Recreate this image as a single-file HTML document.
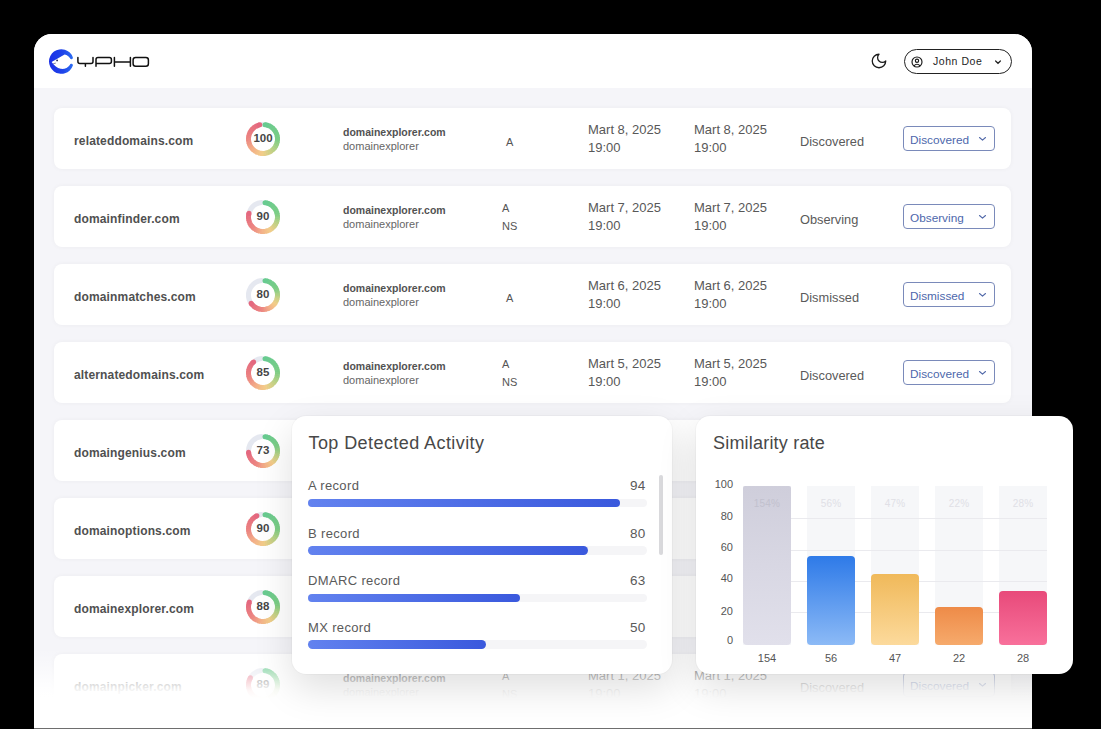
<!DOCTYPE html>
<html><head><meta charset="utf-8">
<style>
*{box-sizing:border-box;margin:0;padding:0}
html,body{width:1101px;height:729px;overflow:hidden;background:#000;font-family:"Liberation Sans",sans-serif}
#win{position:absolute;left:34px;top:34px;width:998px;height:695px;background:#f5f5f9;border-radius:18px 18px 0 0;overflow:hidden}
#hdr{position:absolute;left:0;top:0;width:998px;height:54px;background:#fff}
.row{position:absolute;left:54px;width:957px;height:61px;background:#fff;border-radius:8px;box-shadow:0 0 5px rgba(0,0,0,0.045)}
.t{position:absolute;white-space:nowrap;line-height:1}
.name{left:20px;font-size:12px;font-weight:700;color:#505050;letter-spacing:0.15px}
.ring{position:absolute;left:192px;top:13.5px;width:34px;height:34px}
.ring svg{opacity:0.9}
.ring .in{position:absolute;left:0;top:0;width:34px;height:34px;font-size:11.5px;font-weight:700;color:#464646;text-align:center;line-height:33px}
.d1{left:289px;font-size:10.5px;font-weight:700;color:#525252}
.d2{left:289px;font-size:11px;color:#666}
.rec{font-size:11px;color:#555}
.dt{font-size:13px;color:#585858}
.st{left:746px;top:28px;font-size:12.8px;color:#5a5a5a}
.sel{position:absolute;left:849px;top:18px;width:92px;height:25px;border:1px solid #7a8aba;border-radius:4px}
.sel span{position:absolute;left:6px;top:8px;font-size:11.8px;color:#4d67ac;line-height:1;white-space:nowrap}
.sel svg{position:absolute;left:74px;top:9px}
#fade{position:absolute;left:34px;top:648px;width:998px;height:81px;background:linear-gradient(to bottom,rgba(255,255,255,0) 0px,rgba(255,255,255,0.3) 16px,rgba(255,255,255,0.7) 32px,rgba(255,255,255,0.93) 42px,#fff 50px,#fff 81px)}
#botline{position:absolute;left:34px;top:728px;width:998px;height:1px;background:#6e6e6e}
.card{position:absolute;top:416px;height:258px;background:#fff;border-radius:14px;box-shadow:0 14px 38px rgba(0,0,0,0.13),0 0 0 1px rgba(0,0,0,0.025)}
.ct{position:absolute;white-space:nowrap;line-height:1}
.lbl{position:absolute;left:16px;font-size:13px;letter-spacing:0.35px;color:#5a5a5a;line-height:1;white-space:nowrap}
.val{position:absolute;right:26.5px;font-size:13.5px;letter-spacing:0.3px;color:#5a5a5a;line-height:1;white-space:nowrap}
.trk{position:absolute;left:16px;width:339px;height:8.5px;border-radius:5px;background:#f5f5f7}
.fill{height:8.5px;border-radius:5px;background:linear-gradient(to right,#6282ef,#3a59dd)}
.yl{position:absolute;right:340px;font-size:11px;color:#555;line-height:1;white-space:nowrap;text-align:right}
.col{position:absolute;top:70px;width:48px;height:159px;background:#f6f7f9}
.grid{position:absolute;left:47px;width:304px;height:1px;background:#eaeaee}
.bar{position:absolute;width:48px;border-radius:4px}
.pl{position:absolute;top:83px;width:48px;text-align:center;font-size:10px;letter-spacing:0.2px;color:#e0e0e6;line-height:1}
.xl{position:absolute;top:237px;width:48px;text-align:center;font-size:11px;color:#555;line-height:1}

</style></head><body>
<div id="win"><div id="hdr"></div></div>
<svg style="position:absolute;left:44px;top:45px" width="110" height="33" viewBox="44 45 110 33">
<defs><linearGradient id="lg" x1="0" y1="0" x2="1" y2="0"><stop offset="0" stop-color="#1b2fe6"/><stop offset="0.6" stop-color="#1f45ea"/><stop offset="1" stop-color="#2d6ef2"/></linearGradient></defs>
<path d="M72.9 57.4 A1.6 1.6 0 0 1 69.8 58.1 C69.2 56.6 67.2 54.8 64.6 54.4 L51.6 62.1 C54.3 65.6 57.2 68.2 60.6 68.8 C64.2 69.4 68.2 67.6 69.8 64.9 A1.6 1.6 0 0 1 72.9 65.6 A12.3 12.3 0 1 1 72.9 57.4 Z" fill="url(#lg)"/>
<circle cx="57.1" cy="60.4" r="0.85" fill="#1a1a40"/>
<path d="M53.2 63.7 L55.8 63.1" stroke="#2a2a60" stroke-width="0.6"/>
<g fill="none" stroke="#111" stroke-width="1.5" stroke-linejoin="round" stroke-linecap="round">
<path d="M77.9 57.6 V61.6 Q77.9 63.6 79.9 63.6 H91 Q93 63.6 93 61.6 V57.6 M85.4 63.6 V66.3"/>
<path d="M96 66.3 V59.6 Q96 57.6 98 57.6 H109.4 Q111.4 57.6 111.4 59.6 V61.6 Q111.4 63.6 109.4 63.6 H96"/>
<path d="M114.4 57.6 V66.3 M130.4 57.6 V66.3 M114.4 61.9 H130.4"/>
<path d="M135.6 57.6 H145.9 Q148.4 57.6 148.4 60.1 V63.8 Q148.4 66.3 145.9 66.3 H135.6 Q133.1 66.3 133.1 63.8 V60.1 Q133.1 57.6 135.6 57.6 Z"/>
</g>
</svg>
<svg style="position:absolute;left:870px;top:52px" width="18" height="18" viewBox="0 0 24 24"><path d="M12 3a6 6 0 0 0 9 9 9 9 0 1 1-9-9Z" fill="none" stroke="#1a1a1a" stroke-width="1.7" stroke-linecap="round" stroke-linejoin="round"/></svg>
<div style="position:absolute;left:904px;top:49px;width:108px;height:25px;border:1.2px solid #222;border-radius:13px"></div>
<svg style="position:absolute;left:910.5px;top:56px" width="12" height="12" viewBox="0 0 24 24"><g fill="none" stroke="#1a1a1a" stroke-width="2.3" stroke-linecap="round" stroke-linejoin="round"><circle cx="12" cy="12" r="10"/><circle cx="12" cy="9.5" r="3.3"/><path d="M17.5 19.5a6 5 0 0 0-11 0"/></g></svg>
<div style="position:absolute;left:933px;top:56px;font-size:10.5px;color:#1e1e1e;line-height:1;white-space:nowrap;letter-spacing:0.55px">John Doe</div>
<svg style="position:absolute;left:994px;top:58.5px" width="8" height="6" viewBox="0 0 8 6"><path d="M1.6 2 L4 4.3 L6.4 2" fill="none" stroke="#222" stroke-width="1.2" stroke-linecap="round"/></svg>
<div class="row" style="top:108px"><div class="t name" style="top:27px">relateddomains.com</div><div class="ring"><svg width="34" height="34" viewBox="0 0 34 34" style="position:absolute;left:0;top:0"><g fill="none" stroke-width="5"><path d="M15.74 2.56A14.5 14.5 0 0 1 15.48 2.58" stroke="#e3e6ef" stroke-linecap="round"/><path d="M19.02 2.64A14.5 14.5 0 0 1 21.71 3.29" stroke="#59c684" stroke-linecap="butt"/><path d="M21.11 3.10A14.5 14.5 0 0 1 23.68 4.13" stroke="#5bc683" stroke-linecap="butt"/><path d="M23.12 3.85A14.5 14.5 0 0 1 25.51 5.26" stroke="#5ec682" stroke-linecap="butt"/><path d="M24.99 4.90A14.5 14.5 0 0 1 27.15 6.64" stroke="#60c780" stroke-linecap="butt"/><path d="M26.68 6.21A14.5 14.5 0 0 1 28.56 8.25" stroke="#62c77f" stroke-linecap="butt"/><path d="M28.17 7.75A14.5 14.5 0 0 1 29.72 10.05" stroke="#64c77e" stroke-linecap="butt"/><path d="M29.41 9.50A14.5 14.5 0 0 1 30.61 12.00" stroke="#66c77d" stroke-linecap="butt"/><path d="M30.38 11.41A14.5 14.5 0 0 1 31.20 14.06" stroke="#68c87b" stroke-linecap="butt"/><path d="M31.06 13.44A14.5 14.5 0 0 1 31.48 16.18" stroke="#6bc87a" stroke-linecap="butt"/><path d="M31.43 15.55A14.5 14.5 0 0 1 31.44 18.33" stroke="#6dc879" stroke-linecap="butt"/><path d="M31.48 17.70A14.5 14.5 0 0 1 31.09 20.44" stroke="#75c878" stroke-linecap="butt"/><path d="M31.22 19.82A14.5 14.5 0 0 1 30.43 22.48" stroke="#82c978" stroke-linecap="butt"/><path d="M30.65 21.89A14.5 14.5 0 0 1 29.47 24.40" stroke="#8fca78" stroke-linecap="butt"/><path d="M29.78 23.85A14.5 14.5 0 0 1 28.24 26.15" stroke="#9dcb78" stroke-linecap="butt"/><path d="M28.63 25.66A14.5 14.5 0 0 1 26.77 27.71" stroke="#aacc78" stroke-linecap="butt"/><path d="M27.23 27.28A14.5 14.5 0 0 1 25.09 29.04" stroke="#b7cd78" stroke-linecap="butt"/><path d="M25.60 28.67A14.5 14.5 0 0 1 23.23 30.10" stroke="#c3cc79" stroke-linecap="butt"/><path d="M23.79 29.81A14.5 14.5 0 0 1 21.23 30.87" stroke="#cecb7a" stroke-linecap="butt"/><path d="M21.83 30.67A14.5 14.5 0 0 1 19.14 31.34" stroke="#d9ca7b" stroke-linecap="butt"/><path d="M19.76 31.23A14.5 14.5 0 0 1 17.00 31.50" stroke="#e4c97c" stroke-linecap="butt"/><path d="M17.63 31.49A14.5 14.5 0 0 1 14.86 31.34" stroke="#efc87d" stroke-linecap="butt"/><path d="M15.49 31.42A14.5 14.5 0 0 1 12.77 30.87" stroke="#f2c37d" stroke-linecap="butt"/><path d="M13.38 31.04A14.5 14.5 0 0 1 10.77 30.10" stroke="#f2bd7d" stroke-linecap="butt"/><path d="M11.35 30.35A14.5 14.5 0 0 1 8.91 29.04" stroke="#f2b67c" stroke-linecap="butt"/><path d="M9.45 29.38A14.5 14.5 0 0 1 7.23 27.71" stroke="#f2af7c" stroke-linecap="butt"/><path d="M7.70 28.13A14.5 14.5 0 0 1 5.76 26.15" stroke="#f2a87c" stroke-linecap="butt"/><path d="M6.17 26.64A14.5 14.5 0 0 1 4.53 24.40" stroke="#f1a17b" stroke-linecap="butt"/><path d="M4.86 24.93A14.5 14.5 0 0 1 3.57 22.48" stroke="#f0987a" stroke-linecap="butt"/><path d="M3.83 23.06A14.5 14.5 0 0 1 2.91 20.44" stroke="#ee8f78" stroke-linecap="butt"/><path d="M3.08 21.05A14.5 14.5 0 0 1 2.56 18.33" stroke="#ed8777" stroke-linecap="butt"/><path d="M2.63 18.96A14.5 14.5 0 0 1 2.52 16.18" stroke="#eb7e75" stroke-linecap="butt"/><path d="M2.50 16.82A14.5 14.5 0 0 1 2.80 14.06" stroke="#ea7774" stroke-linecap="butt"/><path d="M2.69 14.68A14.5 14.5 0 0 1 3.39 12.00" stroke="#e97374" stroke-linecap="butt"/><path d="M3.18 12.60A14.5 14.5 0 0 1 4.28 10.05" stroke="#e87073" stroke-linecap="butt"/><path d="M3.98 10.61A14.5 14.5 0 0 1 5.44 8.25" stroke="#e76c73" stroke-linecap="butt"/><path d="M5.07 8.76A14.5 14.5 0 0 1 6.85 6.64" stroke="#e66873" stroke-linecap="butt"/><path d="M6.41 7.09A14.5 14.5 0 0 1 8.49 5.26" stroke="#e56573" stroke-linecap="butt"/><path d="M7.99 5.64A14.5 14.5 0 0 1 10.32 4.13" stroke="#e46173" stroke-linecap="butt"/><path d="M9.76 4.44A14.5 14.5 0 0 1 12.29 3.29" stroke="#e35d72" stroke-linecap="butt"/><path d="M11.69 3.51A14.5 14.5 0 0 1 13.74 2.87" stroke="#e25a72" stroke-linecap="butt"/></g><circle cx="19.02" cy="2.64" r="2.5" fill="#58c685"/><circle cx="13.74" cy="2.87" r="2.5" fill="#e25872"/></svg><div class="in">100</div></div><div class="t d1" style="top:19px">domainexplorer.com</div><div class="t d2" style="top:33px">domainexplorer</div><div class="t rec" style="left:452px;top:29px">A</div><div class="t dt" style="left:534px;top:15px">Mart 8, 2025</div><div class="t dt" style="left:534px;top:33px">19:00</div><div class="t dt" style="left:640px;top:15px">Mart 8, 2025</div><div class="t dt" style="left:640px;top:33px">19:00</div><div class="t st">Discovered</div><div class="sel"><span>Discovered</span><svg width="9" height="6" viewBox="0 0 9 6"><path d="M1.5 1.5 L4.5 4.2 L7.5 1.5" fill="none" stroke="#5068a8" stroke-width="1.1" stroke-linecap="round" stroke-linejoin="round"/></svg></div></div>
<div class="row" style="top:186px"><div class="t name" style="top:27px">domainfinder.com</div><div class="ring"><svg width="34" height="34" viewBox="0 0 34 34" style="position:absolute;left:0;top:0"><g fill="none" stroke-width="5"><path d="M3.65 11.33A14.5 14.5 0 0 1 15.48 2.58" stroke="#e3e6ef" stroke-linecap="round"/><path d="M19.02 2.64A14.5 14.5 0 0 1 21.34 3.17" stroke="#59c684" stroke-linecap="butt"/><path d="M20.73 2.99A14.5 14.5 0 0 1 22.98 3.79" stroke="#5bc683" stroke-linecap="butt"/><path d="M22.40 3.54A14.5 14.5 0 0 1 24.53 4.61" stroke="#5ec682" stroke-linecap="butt"/><path d="M23.98 4.29A14.5 14.5 0 0 1 25.97 5.61" stroke="#60c780" stroke-linecap="butt"/><path d="M25.46 5.22A14.5 14.5 0 0 1 27.28 6.77" stroke="#62c77f" stroke-linecap="butt"/><path d="M26.82 6.33A14.5 14.5 0 0 1 28.43 8.08" stroke="#64c77e" stroke-linecap="butt"/><path d="M28.03 7.59A14.5 14.5 0 0 1 29.43 9.53" stroke="#66c77d" stroke-linecap="butt"/><path d="M29.09 8.99A14.5 14.5 0 0 1 30.24 11.08" stroke="#68c87b" stroke-linecap="butt"/><path d="M29.97 10.51A14.5 14.5 0 0 1 30.85 12.72" stroke="#6bc87a" stroke-linecap="butt"/><path d="M30.65 12.12A14.5 14.5 0 0 1 31.27 14.42" stroke="#6dc879" stroke-linecap="butt"/><path d="M31.14 13.80A14.5 14.5 0 0 1 31.48 16.16" stroke="#75c878" stroke-linecap="butt"/><path d="M31.43 15.53A14.5 14.5 0 0 1 31.47 17.91" stroke="#82c978" stroke-linecap="butt"/><path d="M31.50 17.28A14.5 14.5 0 0 1 31.26 19.65" stroke="#8fca78" stroke-linecap="butt"/><path d="M31.36 19.02A14.5 14.5 0 0 1 30.83 21.35" stroke="#9dcb78" stroke-linecap="butt"/><path d="M31.01 20.74A14.5 14.5 0 0 1 30.21 22.98" stroke="#aacc78" stroke-linecap="butt"/><path d="M30.46 22.40A14.5 14.5 0 0 1 29.39 24.53" stroke="#b7cd78" stroke-linecap="butt"/><path d="M29.71 23.99A14.5 14.5 0 0 1 28.39 25.97" stroke="#c3cc79" stroke-linecap="butt"/><path d="M28.77 25.47A14.5 14.5 0 0 1 27.23 27.28" stroke="#cecb7a" stroke-linecap="butt"/><path d="M27.66 26.82A14.5 14.5 0 0 1 25.91 28.44" stroke="#d9ca7b" stroke-linecap="butt"/><path d="M26.40 28.04A14.5 14.5 0 0 1 24.47 29.43" stroke="#e4c97c" stroke-linecap="butt"/><path d="M25.00 29.09A14.5 14.5 0 0 1 22.92 30.24" stroke="#efc87d" stroke-linecap="butt"/><path d="M23.49 29.97A14.5 14.5 0 0 1 21.28 30.86" stroke="#f2c37d" stroke-linecap="butt"/><path d="M21.88 30.66A14.5 14.5 0 0 1 19.57 31.27" stroke="#f2bd7d" stroke-linecap="butt"/><path d="M20.19 31.14A14.5 14.5 0 0 1 17.83 31.48" stroke="#f2b67c" stroke-linecap="butt"/><path d="M18.47 31.43A14.5 14.5 0 0 1 16.08 31.47" stroke="#f2af7c" stroke-linecap="butt"/><path d="M16.72 31.50A14.5 14.5 0 0 1 14.35 31.25" stroke="#f2a87c" stroke-linecap="butt"/><path d="M14.97 31.36A14.5 14.5 0 0 1 12.65 30.83" stroke="#f1a17b" stroke-linecap="butt"/><path d="M13.25 31.01A14.5 14.5 0 0 1 11.01 30.20" stroke="#f0987a" stroke-linecap="butt"/><path d="M11.59 30.45A14.5 14.5 0 0 1 9.46 29.39" stroke="#ee8f78" stroke-linecap="butt"/><path d="M10.01 29.70A14.5 14.5 0 0 1 8.02 28.39" stroke="#ed8777" stroke-linecap="butt"/><path d="M8.53 28.77A14.5 14.5 0 0 1 6.72 27.22" stroke="#eb7e75" stroke-linecap="butt"/><path d="M7.17 27.66A14.5 14.5 0 0 1 5.56 25.91" stroke="#ea7774" stroke-linecap="butt"/><path d="M5.96 26.40A14.5 14.5 0 0 1 4.57 24.46" stroke="#e97374" stroke-linecap="butt"/><path d="M4.91 25.00A14.5 14.5 0 0 1 3.76 22.91" stroke="#e87073" stroke-linecap="butt"/><path d="M4.03 23.48A14.5 14.5 0 0 1 3.14 21.27" stroke="#e76c73" stroke-linecap="butt"/><path d="M3.34 21.87A14.5 14.5 0 0 1 2.73 19.57" stroke="#e66873" stroke-linecap="butt"/><path d="M2.85 20.19A14.5 14.5 0 0 1 2.52 17.83" stroke="#e56573" stroke-linecap="butt"/><path d="M2.57 18.46A14.5 14.5 0 0 1 2.53 16.08" stroke="#e46173" stroke-linecap="butt"/><path d="M2.50 16.71A14.5 14.5 0 0 1 2.75 14.34" stroke="#e35d72" stroke-linecap="butt"/><path d="M2.64 14.96A14.5 14.5 0 0 1 2.99 13.25" stroke="#e25a72" stroke-linecap="butt"/></g><circle cx="19.02" cy="2.64" r="2.5" fill="#58c685"/><circle cx="2.99" cy="13.25" r="2.5" fill="#e25872"/></svg><div class="in">90</div></div><div class="t d1" style="top:19px">domainexplorer.com</div><div class="t d2" style="top:33px">domainexplorer</div><div class="t rec" style="left:448px;top:17px">A</div><div class="t rec" style="left:448px;top:35px">NS</div><div class="t dt" style="left:534px;top:15px">Mart 7, 2025</div><div class="t dt" style="left:534px;top:33px">19:00</div><div class="t dt" style="left:640px;top:15px">Mart 7, 2025</div><div class="t dt" style="left:640px;top:33px">19:00</div><div class="t st">Observing</div><div class="sel"><span>Observing</span><svg width="9" height="6" viewBox="0 0 9 6"><path d="M1.5 1.5 L4.5 4.2 L7.5 1.5" fill="none" stroke="#5068a8" stroke-width="1.1" stroke-linecap="round" stroke-linejoin="round"/></svg></div></div>
<div class="row" style="top:264px"><div class="t name" style="top:27px">domainmatches.com</div><div class="ring"><svg width="34" height="34" viewBox="0 0 34 34" style="position:absolute;left:0;top:0"><g fill="none" stroke-width="5"><path d="M4.08 23.58A14.5 14.5 0 0 1 15.48 2.58" stroke="#e3e6ef" stroke-linecap="round"/><path d="M19.02 2.64A14.5 14.5 0 0 1 21.04 3.07" stroke="#59c684" stroke-linecap="butt"/><path d="M20.43 2.91A14.5 14.5 0 0 1 22.40 3.54" stroke="#5bc683" stroke-linecap="butt"/><path d="M21.80 3.32A14.5 14.5 0 0 1 23.70 4.14" stroke="#5ec682" stroke-linecap="butt"/><path d="M23.13 3.86A14.5 14.5 0 0 1 24.94 4.87" stroke="#60c780" stroke-linecap="butt"/><path d="M24.40 4.53A14.5 14.5 0 0 1 26.10 5.71" stroke="#62c77f" stroke-linecap="butt"/><path d="M25.60 5.33A14.5 14.5 0 0 1 27.17 6.67" stroke="#64c77e" stroke-linecap="butt"/><path d="M26.71 6.23A14.5 14.5 0 0 1 28.14 7.72" stroke="#66c77d" stroke-linecap="butt"/><path d="M27.73 7.25A14.5 14.5 0 0 1 29.01 8.87" stroke="#68c87b" stroke-linecap="butt"/><path d="M28.64 8.35A14.5 14.5 0 0 1 29.75 10.10" stroke="#6bc87a" stroke-linecap="butt"/><path d="M29.44 9.55A14.5 14.5 0 0 1 30.37 11.39" stroke="#6dc879" stroke-linecap="butt"/><path d="M30.11 10.81A14.5 14.5 0 0 1 30.86 12.74" stroke="#75c878" stroke-linecap="butt"/><path d="M30.66 12.14A14.5 14.5 0 0 1 31.21 14.13" stroke="#82c978" stroke-linecap="butt"/><path d="M31.08 13.52A14.5 14.5 0 0 1 31.43 15.55" stroke="#8fca78" stroke-linecap="butt"/><path d="M31.35 14.93A14.5 14.5 0 0 1 31.50 16.99" stroke="#9dcb78" stroke-linecap="butt"/><path d="M31.49 16.35A14.5 14.5 0 0 1 31.43 18.42" stroke="#aacc78" stroke-linecap="butt"/><path d="M31.48 17.79A14.5 14.5 0 0 1 31.22 19.84" stroke="#b7cd78" stroke-linecap="butt"/><path d="M31.33 19.22A14.5 14.5 0 0 1 30.87 21.23" stroke="#c3cc79" stroke-linecap="butt"/><path d="M31.04 20.62A14.5 14.5 0 0 1 30.38 22.58" stroke="#cecb7a" stroke-linecap="butt"/><path d="M30.61 21.99A14.5 14.5 0 0 1 29.76 23.88" stroke="#d9ca7b" stroke-linecap="butt"/><path d="M30.05 23.32A14.5 14.5 0 0 1 29.02 25.11" stroke="#e4c97c" stroke-linecap="butt"/><path d="M29.36 24.58A14.5 14.5 0 0 1 28.16 26.26" stroke="#efc87d" stroke-linecap="butt"/><path d="M28.55 25.76A14.5 14.5 0 0 1 27.19 27.32" stroke="#f2c37d" stroke-linecap="butt"/><path d="M27.63 26.86A14.5 14.5 0 0 1 26.12 28.27" stroke="#f2bd7d" stroke-linecap="butt"/><path d="M26.60 27.86A14.5 14.5 0 0 1 24.96 29.12" stroke="#f2b67c" stroke-linecap="butt"/><path d="M25.48 28.76A14.5 14.5 0 0 1 23.72 29.85" stroke="#f2af7c" stroke-linecap="butt"/><path d="M24.28 29.54A14.5 14.5 0 0 1 22.42 30.45" stroke="#f2a87c" stroke-linecap="butt"/><path d="M23.00 30.20A14.5 14.5 0 0 1 21.06 30.92" stroke="#f1a17b" stroke-linecap="butt"/><path d="M21.67 30.73A14.5 14.5 0 0 1 19.67 31.25" stroke="#f0987a" stroke-linecap="butt"/><path d="M20.29 31.12A14.5 14.5 0 0 1 18.24 31.45" stroke="#ee8f78" stroke-linecap="butt"/><path d="M18.87 31.38A14.5 14.5 0 0 1 16.81 31.50" stroke="#ed8777" stroke-linecap="butt"/><path d="M17.44 31.49A14.5 14.5 0 0 1 15.38 31.41" stroke="#eb7e75" stroke-linecap="butt"/><path d="M16.01 31.47A14.5 14.5 0 0 1 13.96 31.18" stroke="#ea7774" stroke-linecap="butt"/><path d="M14.58 31.30A14.5 14.5 0 0 1 12.57 30.81" stroke="#e97374" stroke-linecap="butt"/><path d="M13.18 30.99A14.5 14.5 0 0 1 11.23 30.30" stroke="#e87073" stroke-linecap="butt"/><path d="M11.82 30.54A14.5 14.5 0 0 1 9.94 29.67" stroke="#e76c73" stroke-linecap="butt"/><path d="M10.50 29.96A14.5 14.5 0 0 1 8.72 28.91" stroke="#e66873" stroke-linecap="butt"/><path d="M9.25 29.26A14.5 14.5 0 0 1 7.59 28.03" stroke="#e56573" stroke-linecap="butt"/><path d="M8.08 28.43A14.5 14.5 0 0 1 6.54 27.05" stroke="#e46173" stroke-linecap="butt"/><path d="M6.99 27.49A14.5 14.5 0 0 1 5.60 25.96" stroke="#e35d72" stroke-linecap="butt"/><path d="M6.00 26.45A14.5 14.5 0 0 1 5.12 25.32" stroke="#e25a72" stroke-linecap="butt"/></g><circle cx="19.02" cy="2.64" r="2.5" fill="#58c685"/><circle cx="5.12" cy="25.32" r="2.5" fill="#e25872"/></svg><div class="in">80</div></div><div class="t d1" style="top:19px">domainexplorer.com</div><div class="t d2" style="top:33px">domainexplorer</div><div class="t rec" style="left:452px;top:29px">A</div><div class="t dt" style="left:534px;top:15px">Mart 6, 2025</div><div class="t dt" style="left:534px;top:33px">19:00</div><div class="t dt" style="left:640px;top:15px">Mart 6, 2025</div><div class="t dt" style="left:640px;top:33px">19:00</div><div class="t st">Dismissed</div><div class="sel"><span>Dismissed</span><svg width="9" height="6" viewBox="0 0 9 6"><path d="M1.5 1.5 L4.5 4.2 L7.5 1.5" fill="none" stroke="#5068a8" stroke-width="1.1" stroke-linecap="round" stroke-linejoin="round"/></svg></div></div>
<div class="row" style="top:342px"><div class="t name" style="top:27px">alternatedomains.com</div><div class="ring"><svg width="34" height="34" viewBox="0 0 34 34" style="position:absolute;left:0;top:0"><g fill="none" stroke-width="5"><path d="M9.32 4.70A14.5 14.5 0 0 1 15.48 2.58" stroke="#e3e6ef" stroke-linecap="round"/><path d="M19.02 2.64A14.5 14.5 0 0 1 21.55 3.23" stroke="#59c684" stroke-linecap="butt"/><path d="M20.95 3.05A14.5 14.5 0 0 1 23.38 3.98" stroke="#5bc683" stroke-linecap="butt"/><path d="M22.81 3.71A14.5 14.5 0 0 1 25.09 4.96" stroke="#5ec682" stroke-linecap="butt"/><path d="M24.55 4.62A14.5 14.5 0 0 1 26.65 6.17" stroke="#60c780" stroke-linecap="butt"/><path d="M26.16 5.76A14.5 14.5 0 0 1 28.03 7.58" stroke="#62c77f" stroke-linecap="butt"/><path d="M27.60 7.11A14.5 14.5 0 0 1 29.20 9.17" stroke="#64c77e" stroke-linecap="butt"/><path d="M28.85 8.64A14.5 14.5 0 0 1 30.15 10.89" stroke="#66c77d" stroke-linecap="butt"/><path d="M29.87 10.33A14.5 14.5 0 0 1 30.86 12.74" stroke="#68c87b" stroke-linecap="butt"/><path d="M30.66 12.14A14.5 14.5 0 0 1 31.31 14.66" stroke="#6bc87a" stroke-linecap="butt"/><path d="M31.19 14.03A14.5 14.5 0 0 1 31.50 16.62" stroke="#6dc879" stroke-linecap="butt"/><path d="M31.46 15.99A14.5 14.5 0 0 1 31.41 18.59" stroke="#75c878" stroke-linecap="butt"/><path d="M31.47 17.96A14.5 14.5 0 0 1 31.06 20.53" stroke="#82c978" stroke-linecap="butt"/><path d="M31.20 19.92A14.5 14.5 0 0 1 30.45 22.41" stroke="#8fca78" stroke-linecap="butt"/><path d="M30.68 21.82A14.5 14.5 0 0 1 29.60 24.18" stroke="#9dcb78" stroke-linecap="butt"/><path d="M29.90 23.63A14.5 14.5 0 0 1 28.50 25.83" stroke="#aacc78" stroke-linecap="butt"/><path d="M28.88 25.32A14.5 14.5 0 0 1 27.20 27.31" stroke="#b7cd78" stroke-linecap="butt"/><path d="M27.64 26.85A14.5 14.5 0 0 1 25.71 28.60" stroke="#c3cc79" stroke-linecap="butt"/><path d="M26.20 28.20A14.5 14.5 0 0 1 24.05 29.67" stroke="#cecb7a" stroke-linecap="butt"/><path d="M24.60 29.35A14.5 14.5 0 0 1 22.27 30.51" stroke="#d9ca7b" stroke-linecap="butt"/><path d="M22.85 30.27A14.5 14.5 0 0 1 20.38 31.10" stroke="#e4c97c" stroke-linecap="butt"/><path d="M21.00 30.94A14.5 14.5 0 0 1 18.44 31.43" stroke="#efc87d" stroke-linecap="butt"/><path d="M19.07 31.35A14.5 14.5 0 0 1 16.47 31.49" stroke="#f2c37d" stroke-linecap="butt"/><path d="M17.10 31.50A14.5 14.5 0 0 1 14.51 31.28" stroke="#f2bd7d" stroke-linecap="butt"/><path d="M15.13 31.38A14.5 14.5 0 0 1 12.59 30.81" stroke="#f2b67c" stroke-linecap="butt"/><path d="M13.20 30.99A14.5 14.5 0 0 1 10.76 30.09" stroke="#f2af7c" stroke-linecap="butt"/><path d="M11.33 30.35A14.5 14.5 0 0 1 9.04 29.12" stroke="#f2a87c" stroke-linecap="butt"/><path d="M9.58 29.45A14.5 14.5 0 0 1 7.47 27.93" stroke="#f1a17b" stroke-linecap="butt"/><path d="M7.95 28.33A14.5 14.5 0 0 1 6.07 26.53" stroke="#f0987a" stroke-linecap="butt"/><path d="M6.50 27.00A14.5 14.5 0 0 1 4.88 24.96" stroke="#ee8f78" stroke-linecap="butt"/><path d="M5.24 25.48A14.5 14.5 0 0 1 3.91 23.24" stroke="#ed8777" stroke-linecap="butt"/><path d="M4.20 23.81A14.5 14.5 0 0 1 3.19 21.41" stroke="#eb7e75" stroke-linecap="butt"/><path d="M3.39 22.01A14.5 14.5 0 0 1 2.72 19.49" stroke="#ea7774" stroke-linecap="butt"/><path d="M2.84 20.11A14.5 14.5 0 0 1 2.51 17.53" stroke="#e97374" stroke-linecap="butt"/><path d="M2.55 18.16A14.5 14.5 0 0 1 2.57 15.56" stroke="#e87073" stroke-linecap="butt"/><path d="M2.52 16.19A14.5 14.5 0 0 1 2.90 13.62" stroke="#e76c73" stroke-linecap="butt"/><path d="M2.77 14.23A14.5 14.5 0 0 1 3.49 11.73" stroke="#e66873" stroke-linecap="butt"/><path d="M3.27 12.33A14.5 14.5 0 0 1 4.33 9.95" stroke="#e56573" stroke-linecap="butt"/><path d="M4.03 10.51A14.5 14.5 0 0 1 5.40 8.29" stroke="#e46173" stroke-linecap="butt"/><path d="M5.04 8.81A14.5 14.5 0 0 1 6.69 6.80" stroke="#e35d72" stroke-linecap="butt"/><path d="M6.26 7.26A14.5 14.5 0 0 1 7.68 5.89" stroke="#e25a72" stroke-linecap="butt"/></g><circle cx="19.02" cy="2.64" r="2.5" fill="#58c685"/><circle cx="7.68" cy="5.89" r="2.5" fill="#e25872"/></svg><div class="in">85</div></div><div class="t d1" style="top:19px">domainexplorer.com</div><div class="t d2" style="top:33px">domainexplorer</div><div class="t rec" style="left:448px;top:17px">A</div><div class="t rec" style="left:448px;top:35px">NS</div><div class="t dt" style="left:534px;top:15px">Mart 5, 2025</div><div class="t dt" style="left:534px;top:33px">19:00</div><div class="t dt" style="left:640px;top:15px">Mart 5, 2025</div><div class="t dt" style="left:640px;top:33px">19:00</div><div class="t st">Discovered</div><div class="sel"><span>Discovered</span><svg width="9" height="6" viewBox="0 0 9 6"><path d="M1.5 1.5 L4.5 4.2 L7.5 1.5" fill="none" stroke="#5068a8" stroke-width="1.1" stroke-linecap="round" stroke-linejoin="round"/></svg></div></div>
<div class="row" style="top:420px"><div class="t name" style="top:27px">domaingenius.com</div><div class="ring"><svg width="34" height="34" viewBox="0 0 34 34" style="position:absolute;left:0;top:0"><g fill="none" stroke-width="5"><path d="M2.52 16.24A14.5 14.5 0 0 1 15.48 2.58" stroke="#e3e6ef" stroke-linecap="round"/><path d="M19.02 2.64A14.5 14.5 0 0 1 21.22 3.13" stroke="#59c684" stroke-linecap="butt"/><path d="M20.61 2.96A14.5 14.5 0 0 1 22.75 3.69" stroke="#5bc683" stroke-linecap="butt"/><path d="M22.16 3.45A14.5 14.5 0 0 1 24.20 4.41" stroke="#5ec682" stroke-linecap="butt"/><path d="M23.64 4.11A14.5 14.5 0 0 1 25.56 5.30" stroke="#60c780" stroke-linecap="butt"/><path d="M25.05 4.94A14.5 14.5 0 0 1 26.82 6.33" stroke="#62c77f" stroke-linecap="butt"/><path d="M26.34 5.91A14.5 14.5 0 0 1 27.95 7.50" stroke="#64c77e" stroke-linecap="butt"/><path d="M27.53 7.03A14.5 14.5 0 0 1 28.95 8.78" stroke="#66c77d" stroke-linecap="butt"/><path d="M28.58 8.27A14.5 14.5 0 0 1 29.79 10.17" stroke="#68c87b" stroke-linecap="butt"/><path d="M29.48 9.62A14.5 14.5 0 0 1 30.47 11.64" stroke="#6bc87a" stroke-linecap="butt"/><path d="M30.23 11.06A14.5 14.5 0 0 1 30.99 13.19" stroke="#6dc879" stroke-linecap="butt"/><path d="M30.81 12.58A14.5 14.5 0 0 1 31.33 14.78" stroke="#75c878" stroke-linecap="butt"/><path d="M31.22 14.15A14.5 14.5 0 0 1 31.49 16.39" stroke="#82c978" stroke-linecap="butt"/><path d="M31.45 15.76A14.5 14.5 0 0 1 31.46 18.02" stroke="#8fca78" stroke-linecap="butt"/><path d="M31.49 17.39A14.5 14.5 0 0 1 31.26 19.63" stroke="#9dcb78" stroke-linecap="butt"/><path d="M31.36 19.01A14.5 14.5 0 0 1 30.88 21.21" stroke="#aacc78" stroke-linecap="butt"/><path d="M31.05 20.60A14.5 14.5 0 0 1 30.32 22.74" stroke="#b7cd78" stroke-linecap="butt"/><path d="M30.55 22.15A14.5 14.5 0 0 1 29.59 24.19" stroke="#c3cc79" stroke-linecap="butt"/><path d="M29.89 23.63A14.5 14.5 0 0 1 28.71 25.55" stroke="#cecb7a" stroke-linecap="butt"/><path d="M29.07 25.03A14.5 14.5 0 0 1 27.68 26.81" stroke="#d9ca7b" stroke-linecap="butt"/><path d="M28.10 26.33A14.5 14.5 0 0 1 26.51 27.94" stroke="#e4c97c" stroke-linecap="butt"/><path d="M26.98 27.52A14.5 14.5 0 0 1 25.23 28.94" stroke="#efc87d" stroke-linecap="butt"/><path d="M25.74 28.57A14.5 14.5 0 0 1 23.84 29.78" stroke="#f2c37d" stroke-linecap="butt"/><path d="M24.39 29.47A14.5 14.5 0 0 1 22.37 30.47" stroke="#f2bd7d" stroke-linecap="butt"/><path d="M22.95 30.22A14.5 14.5 0 0 1 20.83 30.99" stroke="#f2b67c" stroke-linecap="butt"/><path d="M21.43 30.81A14.5 14.5 0 0 1 19.24 31.33" stroke="#f2af7c" stroke-linecap="butt"/><path d="M19.86 31.22A14.5 14.5 0 0 1 17.62 31.49" stroke="#f2a87c" stroke-linecap="butt"/><path d="M18.25 31.45A14.5 14.5 0 0 1 15.99 31.47" stroke="#f1a17b" stroke-linecap="butt"/><path d="M16.63 31.50A14.5 14.5 0 0 1 14.38 31.26" stroke="#f0987a" stroke-linecap="butt"/><path d="M15.01 31.36A14.5 14.5 0 0 1 12.80 30.88" stroke="#ee8f78" stroke-linecap="butt"/><path d="M13.41 31.05A14.5 14.5 0 0 1 11.28 30.32" stroke="#ed8777" stroke-linecap="butt"/><path d="M11.86 30.56A14.5 14.5 0 0 1 9.82 29.60" stroke="#eb7e75" stroke-linecap="butt"/><path d="M10.38 29.90A14.5 14.5 0 0 1 8.46 28.72" stroke="#ea7774" stroke-linecap="butt"/><path d="M8.98 29.08A14.5 14.5 0 0 1 7.20 27.69" stroke="#e97374" stroke-linecap="butt"/><path d="M7.67 28.10A14.5 14.5 0 0 1 6.07 26.52" stroke="#e87073" stroke-linecap="butt"/><path d="M6.49 26.99A14.5 14.5 0 0 1 5.07 25.24" stroke="#e76c73" stroke-linecap="butt"/><path d="M5.44 25.75A14.5 14.5 0 0 1 4.22 23.85" stroke="#e66873" stroke-linecap="butt"/><path d="M4.53 24.40A14.5 14.5 0 0 1 3.53 22.38" stroke="#e56573" stroke-linecap="butt"/><path d="M3.78 22.96A14.5 14.5 0 0 1 3.02 20.84" stroke="#e46173" stroke-linecap="butt"/><path d="M3.20 21.44A14.5 14.5 0 0 1 2.68 19.25" stroke="#e35d72" stroke-linecap="butt"/><path d="M2.79 19.87A14.5 14.5 0 0 1 2.56 18.26" stroke="#e25a72" stroke-linecap="butt"/></g><circle cx="19.02" cy="2.64" r="2.5" fill="#58c685"/><circle cx="2.56" cy="18.26" r="2.5" fill="#e25872"/></svg><div class="in">73</div></div><div class="t d1" style="top:19px">domainexplorer.com</div><div class="t d2" style="top:33px">domainexplorer</div><div class="t rec" style="left:452px;top:29px">A</div></div>
<div class="row" style="top:498px"><div class="t name" style="top:27px">domainoptions.com</div><div class="ring"><svg width="34" height="34" viewBox="0 0 34 34" style="position:absolute;left:0;top:0"><g fill="none" stroke-width="5"><path d="M12.76 3.13A14.5 14.5 0 0 1 15.48 2.58" stroke="#e3e6ef" stroke-linecap="round"/><path d="M19.02 2.64A14.5 14.5 0 0 1 21.64 3.26" stroke="#59c684" stroke-linecap="butt"/><path d="M21.04 3.07A14.5 14.5 0 0 1 23.55 4.06" stroke="#5bc683" stroke-linecap="butt"/><path d="M22.98 3.79A14.5 14.5 0 0 1 25.32 5.13" stroke="#5ec682" stroke-linecap="butt"/><path d="M24.80 4.77A14.5 14.5 0 0 1 26.93 6.43" stroke="#60c780" stroke-linecap="butt"/><path d="M26.46 6.01A14.5 14.5 0 0 1 28.33 7.95" stroke="#62c77f" stroke-linecap="butt"/><path d="M27.92 7.46A14.5 14.5 0 0 1 29.50 9.65" stroke="#64c77e" stroke-linecap="butt"/><path d="M29.17 9.11A14.5 14.5 0 0 1 30.42 11.50" stroke="#66c77d" stroke-linecap="butt"/><path d="M30.17 10.92A14.5 14.5 0 0 1 31.06 13.47" stroke="#68c87b" stroke-linecap="butt"/><path d="M30.90 12.86A14.5 14.5 0 0 1 31.42 15.50" stroke="#6bc87a" stroke-linecap="butt"/><path d="M31.34 14.88A14.5 14.5 0 0 1 31.49 17.57" stroke="#6dc879" stroke-linecap="butt"/><path d="M31.50 16.94A14.5 14.5 0 0 1 31.26 19.62" stroke="#75c878" stroke-linecap="butt"/><path d="M31.36 19.00A14.5 14.5 0 0 1 30.74 21.62" stroke="#82c978" stroke-linecap="butt"/><path d="M30.93 21.02A14.5 14.5 0 0 1 29.95 23.53" stroke="#8fca78" stroke-linecap="butt"/><path d="M30.22 22.96A14.5 14.5 0 0 1 28.88 25.31" stroke="#9dcb78" stroke-linecap="butt"/><path d="M29.24 24.78A14.5 14.5 0 0 1 27.58 26.91" stroke="#aacc78" stroke-linecap="butt"/><path d="M28.01 26.44A14.5 14.5 0 0 1 26.07 28.32" stroke="#b7cd78" stroke-linecap="butt"/><path d="M26.55 27.91A14.5 14.5 0 0 1 24.36 29.49" stroke="#c3cc79" stroke-linecap="butt"/><path d="M24.90 29.16A14.5 14.5 0 0 1 22.51 30.41" stroke="#cecb7a" stroke-linecap="butt"/><path d="M23.09 30.16A14.5 14.5 0 0 1 20.55 31.06" stroke="#d9ca7b" stroke-linecap="butt"/><path d="M21.16 30.89A14.5 14.5 0 0 1 18.52 31.42" stroke="#e4c97c" stroke-linecap="butt"/><path d="M19.14 31.34A14.5 14.5 0 0 1 16.45 31.49" stroke="#efc87d" stroke-linecap="butt"/><path d="M17.08 31.50A14.5 14.5 0 0 1 14.39 31.26" stroke="#f2c37d" stroke-linecap="butt"/><path d="M15.02 31.36A14.5 14.5 0 0 1 12.39 30.75" stroke="#f2bd7d" stroke-linecap="butt"/><path d="M13.00 30.94A14.5 14.5 0 0 1 10.48 29.95" stroke="#f2b67c" stroke-linecap="butt"/><path d="M11.06 30.23A14.5 14.5 0 0 1 8.71 28.90" stroke="#f2af7c" stroke-linecap="butt"/><path d="M9.24 29.25A14.5 14.5 0 0 1 7.10 27.60" stroke="#f2a87c" stroke-linecap="butt"/><path d="M7.57 28.02A14.5 14.5 0 0 1 5.70 26.08" stroke="#f1a17b" stroke-linecap="butt"/><path d="M6.10 26.57A14.5 14.5 0 0 1 4.52 24.38" stroke="#f0987a" stroke-linecap="butt"/><path d="M4.85 24.92A14.5 14.5 0 0 1 3.60 22.53" stroke="#ee8f78" stroke-linecap="butt"/><path d="M3.85 23.11A14.5 14.5 0 0 1 2.95 20.57" stroke="#ed8777" stroke-linecap="butt"/><path d="M3.12 21.18A14.5 14.5 0 0 1 2.58 18.53" stroke="#eb7e75" stroke-linecap="butt"/><path d="M2.66 19.16A14.5 14.5 0 0 1 2.51 16.47" stroke="#ea7774" stroke-linecap="butt"/><path d="M2.50 17.10A14.5 14.5 0 0 1 2.73 14.41" stroke="#e97374" stroke-linecap="butt"/><path d="M2.63 15.04A14.5 14.5 0 0 1 3.25 12.41" stroke="#e87073" stroke-linecap="butt"/><path d="M3.06 13.02A14.5 14.5 0 0 1 4.04 10.50" stroke="#e76c73" stroke-linecap="butt"/><path d="M3.77 11.07A14.5 14.5 0 0 1 5.09 8.72" stroke="#e66873" stroke-linecap="butt"/><path d="M4.74 9.25A14.5 14.5 0 0 1 6.39 7.12" stroke="#e56573" stroke-linecap="butt"/><path d="M5.97 7.59A14.5 14.5 0 0 1 7.90 5.71" stroke="#e46173" stroke-linecap="butt"/><path d="M7.42 6.12A14.5 14.5 0 0 1 9.60 4.53" stroke="#e35d72" stroke-linecap="butt"/><path d="M9.07 4.86A14.5 14.5 0 0 1 10.87 3.86" stroke="#e25a72" stroke-linecap="butt"/></g><circle cx="19.02" cy="2.64" r="2.5" fill="#58c685"/><circle cx="10.87" cy="3.86" r="2.5" fill="#e25872"/></svg><div class="in">90</div></div><div class="t d1" style="top:19px">domainexplorer.com</div><div class="t d2" style="top:33px">domainexplorer</div><div class="t rec" style="left:452px;top:29px">A</div></div>
<div class="row" style="top:576px"><div class="t name" style="top:27px">domainexplorer.com</div><div class="ring"><svg width="34" height="34" viewBox="0 0 34 34" style="position:absolute;left:0;top:0"><g fill="none" stroke-width="5"><path d="M4.20 10.19A14.5 14.5 0 0 1 15.48 2.58" stroke="#e3e6ef" stroke-linecap="round"/><path d="M19.02 2.64A14.5 14.5 0 0 1 21.37 3.17" stroke="#59c684" stroke-linecap="butt"/><path d="M20.77 3.00A14.5 14.5 0 0 1 23.04 3.82" stroke="#5bc683" stroke-linecap="butt"/><path d="M22.46 3.57A14.5 14.5 0 0 1 24.61 4.66" stroke="#5ec682" stroke-linecap="butt"/><path d="M24.06 4.34A14.5 14.5 0 0 1 26.07 5.68" stroke="#60c780" stroke-linecap="butt"/><path d="M25.56 5.30A14.5 14.5 0 0 1 27.39 6.88" stroke="#62c77f" stroke-linecap="butt"/><path d="M26.94 6.44A14.5 14.5 0 0 1 28.55 8.23" stroke="#64c77e" stroke-linecap="butt"/><path d="M28.16 7.74A14.5 14.5 0 0 1 29.54 9.72" stroke="#66c77d" stroke-linecap="butt"/><path d="M29.21 9.18A14.5 14.5 0 0 1 30.34 11.31" stroke="#68c87b" stroke-linecap="butt"/><path d="M30.08 10.73A14.5 14.5 0 0 1 30.93 12.99" stroke="#6bc87a" stroke-linecap="butt"/><path d="M30.75 12.39A14.5 14.5 0 0 1 31.32 14.73" stroke="#6dc879" stroke-linecap="butt"/><path d="M31.21 14.11A14.5 14.5 0 0 1 31.49 16.51" stroke="#75c878" stroke-linecap="butt"/><path d="M31.46 15.87A14.5 14.5 0 0 1 31.44 18.29" stroke="#82c978" stroke-linecap="butt"/><path d="M31.49 17.66A14.5 14.5 0 0 1 31.18 20.05" stroke="#8fca78" stroke-linecap="butt"/><path d="M31.29 19.43A14.5 14.5 0 0 1 30.69 21.77" stroke="#9dcb78" stroke-linecap="butt"/><path d="M30.89 21.17A14.5 14.5 0 0 1 30.00 23.41" stroke="#aacc78" stroke-linecap="butt"/><path d="M30.27 22.84A14.5 14.5 0 0 1 29.12 24.96" stroke="#b7cd78" stroke-linecap="butt"/><path d="M29.45 24.42A14.5 14.5 0 0 1 28.05 26.39" stroke="#c3cc79" stroke-linecap="butt"/><path d="M28.45 25.90A14.5 14.5 0 0 1 26.81 27.67" stroke="#cecb7a" stroke-linecap="butt"/><path d="M27.27 27.24A14.5 14.5 0 0 1 25.43 28.80" stroke="#d9ca7b" stroke-linecap="butt"/><path d="M25.94 28.42A14.5 14.5 0 0 1 23.92 29.74" stroke="#e4c97c" stroke-linecap="butt"/><path d="M24.47 29.43A14.5 14.5 0 0 1 22.30 30.50" stroke="#efc87d" stroke-linecap="butt"/><path d="M22.89 30.25A14.5 14.5 0 0 1 20.61 31.04" stroke="#f2c37d" stroke-linecap="butt"/><path d="M21.22 30.87A14.5 14.5 0 0 1 18.85 31.38" stroke="#f2bd7d" stroke-linecap="butt"/><path d="M19.48 31.29A14.5 14.5 0 0 1 17.08 31.50" stroke="#f2b67c" stroke-linecap="butt"/><path d="M17.71 31.48A14.5 14.5 0 0 1 15.30 31.40" stroke="#f2af7c" stroke-linecap="butt"/><path d="M15.93 31.46A14.5 14.5 0 0 1 13.54 31.08" stroke="#f2a87c" stroke-linecap="butt"/><path d="M14.16 31.22A14.5 14.5 0 0 1 11.84 30.55" stroke="#f1a17b" stroke-linecap="butt"/><path d="M12.44 30.76A14.5 14.5 0 0 1 10.22 29.81" stroke="#f0987a" stroke-linecap="butt"/><path d="M10.78 30.10A14.5 14.5 0 0 1 8.69 28.88" stroke="#ee8f78" stroke-linecap="butt"/><path d="M9.22 29.24A14.5 14.5 0 0 1 7.30 27.78" stroke="#ed8777" stroke-linecap="butt"/><path d="M7.78 28.19A14.5 14.5 0 0 1 6.05 26.50" stroke="#eb7e75" stroke-linecap="butt"/><path d="M6.47 26.97A14.5 14.5 0 0 1 4.96 25.09" stroke="#ea7774" stroke-linecap="butt"/><path d="M5.33 25.60A14.5 14.5 0 0 1 4.06 23.55" stroke="#e97374" stroke-linecap="butt"/><path d="M4.36 24.11A14.5 14.5 0 0 1 3.36 21.91" stroke="#e87073" stroke-linecap="butt"/><path d="M3.58 22.50A14.5 14.5 0 0 1 2.86 20.20" stroke="#e76c73" stroke-linecap="butt"/><path d="M3.01 20.81A14.5 14.5 0 0 1 2.57 18.44" stroke="#e66873" stroke-linecap="butt"/><path d="M2.65 19.07A14.5 14.5 0 0 1 2.50 16.66" stroke="#e56573" stroke-linecap="butt"/><path d="M2.50 17.29A14.5 14.5 0 0 1 2.66 14.88" stroke="#e46173" stroke-linecap="butt"/><path d="M2.58 15.51A14.5 14.5 0 0 1 3.02 13.14" stroke="#e35d72" stroke-linecap="butt"/><path d="M2.87 13.75A14.5 14.5 0 0 1 3.37 12.04" stroke="#e25a72" stroke-linecap="butt"/></g><circle cx="19.02" cy="2.64" r="2.5" fill="#58c685"/><circle cx="3.37" cy="12.04" r="2.5" fill="#e25872"/></svg><div class="in">88</div></div><div class="t d1" style="top:19px">domainexplorer.com</div><div class="t d2" style="top:33px">domainexplorer</div><div class="t rec" style="left:452px;top:29px">A</div></div>
<div class="row" style="top:654px"><div class="t name" style="top:27px">domainpicker.com</div><div class="ring"><svg width="34" height="34" viewBox="0 0 34 34" style="position:absolute;left:0;top:0"><g fill="none" stroke-width="5"><path d="M5.57 8.07A14.5 14.5 0 0 1 15.48 2.58" stroke="#e3e6ef" stroke-linecap="round"/><path d="M19.02 2.64A14.5 14.5 0 0 1 21.43 3.19" stroke="#59c684" stroke-linecap="butt"/><path d="M20.83 3.01A14.5 14.5 0 0 1 23.15 3.87" stroke="#5bc683" stroke-linecap="butt"/><path d="M22.57 3.61A14.5 14.5 0 0 1 24.77 4.76" stroke="#5ec682" stroke-linecap="butt"/><path d="M24.23 4.43A14.5 14.5 0 0 1 26.26 5.84" stroke="#60c780" stroke-linecap="butt"/><path d="M25.77 5.45A14.5 14.5 0 0 1 27.60 7.11" stroke="#62c77f" stroke-linecap="butt"/><path d="M27.16 6.66A14.5 14.5 0 0 1 28.78 8.54" stroke="#64c77e" stroke-linecap="butt"/><path d="M28.39 8.03A14.5 14.5 0 0 1 29.75 10.10" stroke="#66c77d" stroke-linecap="butt"/><path d="M29.44 9.55A14.5 14.5 0 0 1 30.53 11.78" stroke="#68c87b" stroke-linecap="butt"/><path d="M30.29 11.19A14.5 14.5 0 0 1 31.08 13.54" stroke="#6bc87a" stroke-linecap="butt"/><path d="M30.92 12.93A14.5 14.5 0 0 1 31.41 15.36" stroke="#6dc879" stroke-linecap="butt"/><path d="M31.32 14.73A14.5 14.5 0 0 1 31.50 17.20" stroke="#75c878" stroke-linecap="butt"/><path d="M31.49 16.57A14.5 14.5 0 0 1 31.36 19.04" stroke="#82c978" stroke-linecap="butt"/><path d="M31.43 18.41A14.5 14.5 0 0 1 30.98 20.85" stroke="#8fca78" stroke-linecap="butt"/><path d="M31.13 20.24A14.5 14.5 0 0 1 30.38 22.60" stroke="#9dcb78" stroke-linecap="butt"/><path d="M30.61 22.01A14.5 14.5 0 0 1 29.56 24.25" stroke="#aacc78" stroke-linecap="butt"/><path d="M29.86 23.70A14.5 14.5 0 0 1 28.53 25.79" stroke="#b7cd78" stroke-linecap="butt"/><path d="M28.91 25.28A14.5 14.5 0 0 1 27.32 27.18" stroke="#c3cc79" stroke-linecap="butt"/><path d="M27.76 26.72A14.5 14.5 0 0 1 25.95 28.41" stroke="#cecb7a" stroke-linecap="butt"/><path d="M26.44 28.01A14.5 14.5 0 0 1 24.42 29.45" stroke="#d9ca7b" stroke-linecap="butt"/><path d="M24.96 29.12A14.5 14.5 0 0 1 22.78 30.30" stroke="#e4c97c" stroke-linecap="butt"/><path d="M23.36 30.03A14.5 14.5 0 0 1 21.05 30.92" stroke="#efc87d" stroke-linecap="butt"/><path d="M21.65 30.73A14.5 14.5 0 0 1 19.24 31.33" stroke="#f2c37d" stroke-linecap="butt"/><path d="M19.87 31.21A14.5 14.5 0 0 1 17.40 31.49" stroke="#f2bd7d" stroke-linecap="butt"/><path d="M18.04 31.46A14.5 14.5 0 0 1 15.56 31.43" stroke="#f2b67c" stroke-linecap="butt"/><path d="M16.19 31.48A14.5 14.5 0 0 1 13.74 31.13" stroke="#f2af7c" stroke-linecap="butt"/><path d="M14.36 31.26A14.5 14.5 0 0 1 11.97 30.60" stroke="#f2a87c" stroke-linecap="butt"/><path d="M12.57 30.81A14.5 14.5 0 0 1 10.28 29.85" stroke="#f1a17b" stroke-linecap="butt"/><path d="M10.85 30.13A14.5 14.5 0 0 1 8.70 28.89" stroke="#f0987a" stroke-linecap="butt"/><path d="M9.23 29.24A14.5 14.5 0 0 1 7.26 27.74" stroke="#ee8f78" stroke-linecap="butt"/><path d="M7.74 28.16A14.5 14.5 0 0 1 5.97 26.42" stroke="#ed8777" stroke-linecap="butt"/><path d="M6.40 26.89A14.5 14.5 0 0 1 4.87 24.94" stroke="#eb7e75" stroke-linecap="butt"/><path d="M5.22 25.46A14.5 14.5 0 0 1 3.96 23.33" stroke="#ea7774" stroke-linecap="butt"/><path d="M4.25 23.90A14.5 14.5 0 0 1 3.26 21.62" stroke="#e97374" stroke-linecap="butt"/><path d="M3.47 22.22A14.5 14.5 0 0 1 2.78 19.84" stroke="#e87073" stroke-linecap="butt"/><path d="M2.92 20.46A14.5 14.5 0 0 1 2.54 18.01" stroke="#e76c73" stroke-linecap="butt"/><path d="M2.59 18.64A14.5 14.5 0 0 1 2.52 16.17" stroke="#e66873" stroke-linecap="butt"/><path d="M2.50 16.80A14.5 14.5 0 0 1 2.75 14.33" stroke="#e56573" stroke-linecap="butt"/><path d="M2.64 14.96A14.5 14.5 0 0 1 3.20 12.54" stroke="#e46173" stroke-linecap="butt"/><path d="M3.02 13.15A14.5 14.5 0 0 1 3.88 10.83" stroke="#e35d72" stroke-linecap="butt"/><path d="M3.62 11.40A14.5 14.5 0 0 1 4.44 9.75" stroke="#e25a72" stroke-linecap="butt"/></g><circle cx="19.02" cy="2.64" r="2.5" fill="#58c685"/><circle cx="4.44" cy="9.75" r="2.5" fill="#e25872"/></svg><div class="in">89</div></div><div class="t d1" style="top:19px">domainexplorer.com</div><div class="t d2" style="top:33px">domainexplorer</div><div class="t rec" style="left:448px;top:17px">A</div><div class="t rec" style="left:448px;top:35px">NS</div><div class="t dt" style="left:534px;top:15px">Mart 1, 2025</div><div class="t dt" style="left:534px;top:33px">19:00</div><div class="t dt" style="left:640px;top:15px">Mart 1, 2025</div><div class="t dt" style="left:640px;top:33px">19:00</div><div class="t st">Discovered</div><div class="sel"><span>Discovered</span><svg width="9" height="6" viewBox="0 0 9 6"><path d="M1.5 1.5 L4.5 4.2 L7.5 1.5" fill="none" stroke="#5068a8" stroke-width="1.1" stroke-linecap="round" stroke-linejoin="round"/></svg></div></div>
<div id="fade"></div><div id="botline"></div>
<div class="card" style="left:292px;width:380px">
  <div class="ct" style="left:16.5px;top:17.5px;font-size:18px;letter-spacing:0.42px;color:#484848">Top Detected Activity</div>
  <div style="position:absolute;left:367px;top:59px;width:4px;height:80px;border-radius:2px;background:#d9d9dc"></div>
  <div class="lbl" style="top:63px">A record</div><div class="val" style="top:63px">94</div>
  <div class="trk" style="top:82.5px"><div class="fill" style="width:312px"></div></div>
  <div class="lbl" style="top:110.5px">B record</div><div class="val" style="top:110.5px">80</div>
  <div class="trk" style="top:130px"><div class="fill" style="width:280px"></div></div>
  <div class="lbl" style="top:158px">DMARC record</div><div class="val" style="top:158px">63</div>
  <div class="trk" style="top:177.5px"><div class="fill" style="width:212px"></div></div>
  <div class="lbl" style="top:205px">MX record</div><div class="val" style="top:205px">50</div>
  <div class="trk" style="top:224px"><div class="fill" style="width:178px"></div></div>
</div>
<div class="card" style="left:696px;width:377px">
  <div class="ct" style="left:17px;top:17.5px;font-size:18px;letter-spacing:0.2px;color:#484848">Similarity rate</div>
  <div class="yl" style="top:63px">100</div>
  <div class="yl" style="top:95px">80</div>
  <div class="yl" style="top:126px">60</div>
  <div class="yl" style="top:157px">40</div>
  <div class="yl" style="top:189.5px">20</div>
  <div class="yl" style="top:218.5px">0</div>
  <div class="col" style="left:47px"></div>
  <div class="col" style="left:111px"></div>
  <div class="col" style="left:175px"></div>
  <div class="col" style="left:239px"></div>
  <div class="col" style="left:303px"></div>
  <div class="grid" style="top:102px"></div>
  <div class="grid" style="top:134px"></div>
  <div class="grid" style="top:165px"></div>
  <div class="grid" style="top:196px"></div>
  <div class="bar" style="left:47px;top:70px;height:159px;border-radius:2px 2px 4px 4px;background:linear-gradient(#cfcedb,#e1e0eb)"></div>
  <div class="bar" style="left:111px;top:140px;height:89px;background:linear-gradient(#2e7ae8,#8cbaf6)"></div>
  <div class="bar" style="left:175px;top:158px;height:71px;background:linear-gradient(#f0b95a,#fcda9c)"></div>
  <div class="bar" style="left:239px;top:191px;height:38px;background:linear-gradient(#ee8b48,#f6aa6c)"></div>
  <div class="bar" style="left:303px;top:175px;height:54px;background:linear-gradient(#e84a7a,#f8709b)"></div>
  <div class="pl" style="left:47px;color:#c2c1ce">154%</div>
  <div class="pl" style="left:111px">56%</div>
  <div class="pl" style="left:175px">47%</div>
  <div class="pl" style="left:239px">22%</div>
  <div class="pl" style="left:303px">28%</div>
  <div class="xl" style="left:47px">154</div>
  <div class="xl" style="left:111px">56</div>
  <div class="xl" style="left:175px">47</div>
  <div class="xl" style="left:239px">22</div>
  <div class="xl" style="left:303px">28</div>
</div>
</body></html>
